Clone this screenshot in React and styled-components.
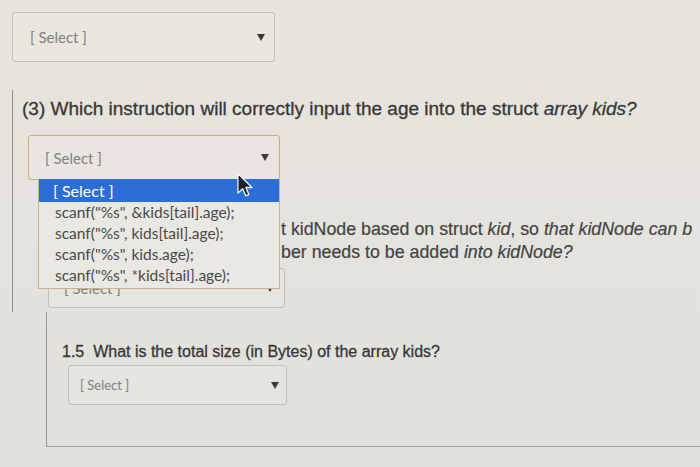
import React from "react";
import styled, { createGlobalStyle } from "styled-components";

const GlobalStyle = createGlobalStyle`
  html, body {
    margin: 0;
    padding: 0;
  }
  body {
    width: 700px;
    height: 467px;
    overflow: hidden;
    background: linear-gradient(180deg, #e8e4dc 0%, #e5e3dd 45%, #e1e1dd 100%);
    font-family: "Liberation Sans", Arial, sans-serif;
  }
`;

const Page = styled.div`
  box-sizing: border-box;
  height: 467px;
  padding-top: 12px;
`;

const SelectBox = styled.div`
  position: relative;
  box-sizing: border-box;
  display: flex;
  align-items: center;
  justify-content: space-between;
  width: ${(p) => p.$w}px;
  height: ${(p) => p.$h}px;
  margin-left: ${(p) => p.$x}px;
  padding: 0 ${(p) => p.$pr}px 0 ${(p) => p.$pl}px;
  border: 1px solid ${(p) => (p.$focus ? "#cfad78" : "#c2c0ba")};
  border-radius: 3px;
  background: rgba(255, 255, 255, 0.12);
  font-family: Lato, "Open Sans", sans-serif;
  font-size: ${(p) => p.$fs}px;
  color: #82817d;
`;

const Caret = styled.span`
  width: 0;
  height: 0;
  border-left: 4px solid transparent;
  border-right: 4px solid transparent;
  border-top: 7px solid #3b3b3d;
`;

const QuestionBlock = styled.div`
  margin: 28px 0 0 12px;
  padding: 8px 0 4px 9px;
  border-left: 1px solid #8f8d88;
`;

const Prompt = styled.p`
  margin: 0;
  font-size: ${(p) => p.$fs}px;
  line-height: ${(p) => p.$lh}px;
  color: #373737;
  -webkit-text-stroke: 0.3px #373737;
  white-space: nowrap;
`;

const SelectRow = styled.div`
  margin-top: ${(p) => p.$mt}px;
`;

const OptionList = styled.ul`
  position: absolute;
  top: 100%;
  left: 9px;
  z-index: 2;
  box-sizing: border-box;
  width: 242px;
  margin: 0;
  padding: 0 0 2px;
  list-style: none;
  background: #e9e8e3;
  border: 1px solid #c9b38a;
  border-top: none;
  font-family: Lato, "Open Sans", sans-serif;
`;

const Option = styled.li`
  height: ${(p) => (p.$active ? 23 : 21)}px;
  line-height: ${(p) => (p.$active ? 23 : 21)}px;
  padding-left: ${(p) => (p.$active ? 14 : 16)}px;
  font-size: ${(p) => (p.$active ? 16 : 15.5)}px;
  background: ${(p) => (p.$active ? "#2c6ed5" : "transparent")};
  color: ${(p) => (p.$active ? "#ffffff" : "#4a4a4a")};
  white-space: nowrap;
`;

const Pointer = styled.svg`
  position: absolute;
  left: 207px;
  top: 36px;
  z-index: 3;
`;

const Part = styled.div`
  margin-top: ${(p) => p.$mt}px;
  padding-left: 20px;
`;

const Line = styled.div`
  font-size: 17.8px;
  line-height: 23px;
  color: #434343;
  -webkit-text-stroke: 0.2px #434343;
  white-space: nowrap;
  overflow: hidden;
`;

/* the start of each line sits under the open option list */
const Lead = styled.span`
  display: inline-block;
  width: 239px;
`;

const SubPart = styled.div`
  box-sizing: border-box;
  height: 135px;
  margin-left: 46px;
  padding: 30px 0 0 15px;
  border-left: 1px solid #9a9893;
  border-bottom: 1px solid #a4a29d;
`;

const cursor = (
  <Pointer width="18" height="26" viewBox="0 0 16 24">
    <path
      d="M1.5 1.5 L1.5 19.5 L5.8 15.4 L8.7 22 L11.6 20.8 L8.8 14.3 L14.5 14.3 Z"
      fill="#1d1f2c"
      stroke="#f4f4f4"
      strokeWidth="1.2"
      strokeLinejoin="round"
    />
  </Pointer>
);

const options = [
  'scanf("%s", &kids[tail].age);',
  'scanf("%s", kids[tail].age);',
  'scanf("%s", kids.age);',
  'scanf("%s", *kids[tail].age);',
];

export default function App() {
  return (
    <>
      <GlobalStyle />
      <Page>
        <SelectBox $w={263} $h={50} $x={12} $pl={17} $pr={9} $fs={15}>
          [ Select ]
          <Caret />
        </SelectBox>

        <QuestionBlock>
          <Prompt $fs={19} $lh={22}>
            (3) Which instruction will correctly input the age into the struct <i>array kids?</i>
          </Prompt>

          <SelectRow $mt={15}>
            <SelectBox $w={252} $h={45} $x={6} $pl={16} $pr={10} $fs={15} $focus>
              [ Select ]
              <Caret />
              <OptionList>
                <Option $active>[ Select ]</Option>
                {options.map((o) => (
                  <Option key={o}>{o}</Option>
                ))}
              </OptionList>
              {cursor}
            </SelectBox>
          </SelectRow>

          <Part $mt={38}>
            <Line>
              <Lead />t kidNode based on struct <i>kid</i>, so <i>that kidNode can b</i>
            </Line>
            <Line>
              <Lead />ber needs to be added <i>into kidNode?</i>
            </Line>
            <SelectRow $mt={4}>
              <SelectBox $w={237} $h={40} $x={6} $pl={15} $pr={10} $fs={15}>
                [ Select ]
                <Caret />
              </SelectBox>
            </SelectRow>
          </Part>
        </QuestionBlock>

        <SubPart>
          <Prompt $fs={16} $lh={20}>
            1.5&nbsp; What is the total size (in Bytes) of the array kids?
          </Prompt>
          <SelectRow $mt={3}>
            <SelectBox $w={219} $h={40} $x={6} $pl={11} $pr={7} $fs={13}>
              [ Select ]
              <Caret />
            </SelectBox>
          </SelectRow>
        </SubPart>
      </Page>
    </>
  );
}
